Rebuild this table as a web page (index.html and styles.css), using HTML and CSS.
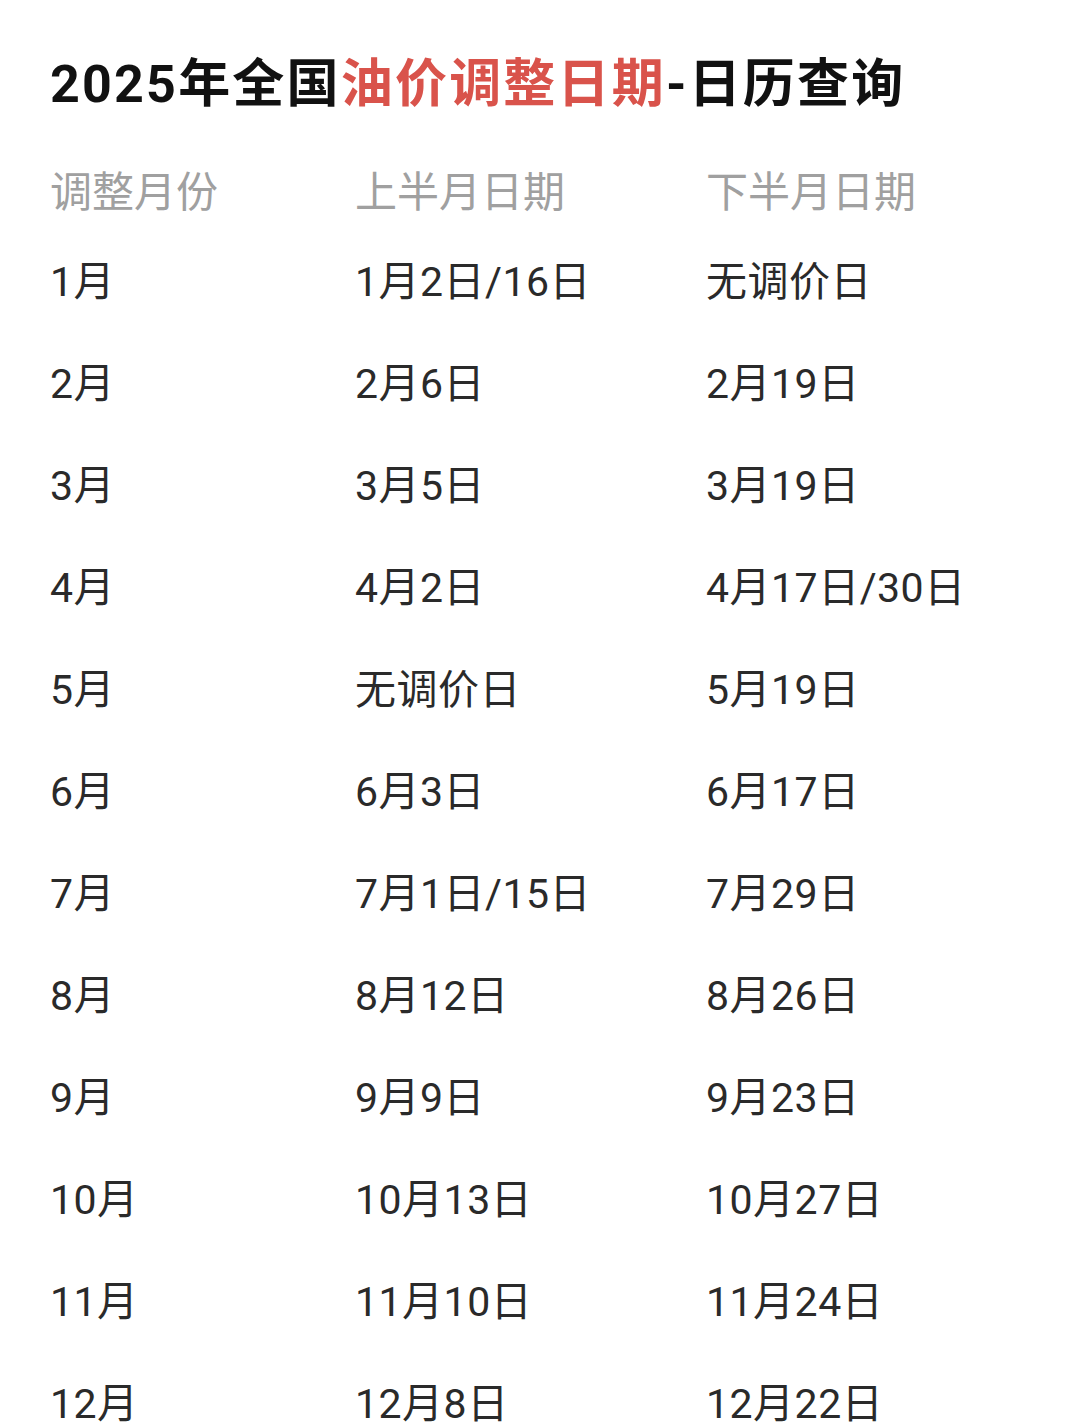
FILE: index.html
```html
<!DOCTYPE html>
<html lang="zh-CN">
<head>
<meta charset="utf-8">
<link rel="stylesheet" href="styles.css">
</head>
<body>
<div class="page">
  <h1 class="title">2025年全国<span class="hl">油价调整日期</span>-日历查询</h1>
  <div class="table">
    <div class="row head"><div>调整月份</div><div>上半月日期</div><div>下半月日期</div></div>
    <div class="row"><div>1月</div><div>1月2日/16日</div><div>无调价日</div></div>
    <div class="row"><div>2月</div><div>2月6日</div><div>2月19日</div></div>
    <div class="row"><div>3月</div><div>3月5日</div><div>3月19日</div></div>
    <div class="row"><div>4月</div><div>4月2日</div><div>4月17日/30日</div></div>
    <div class="row"><div>5月</div><div>无调价日</div><div>5月19日</div></div>
    <div class="row"><div>6月</div><div>6月3日</div><div>6月17日</div></div>
    <div class="row"><div>7月</div><div>7月1日/15日</div><div>7月29日</div></div>
    <div class="row"><div>8月</div><div>8月12日</div><div>8月26日</div></div>
    <div class="row"><div>9月</div><div>9月9日</div><div>9月23日</div></div>
    <div class="row"><div>10月</div><div>10月13日</div><div>10月27日</div></div>
    <div class="row"><div>11月</div><div>11月10日</div><div>11月24日</div></div>
    <div class="row"><div>12月</div><div>12月8日</div><div>12月22日</div></div>
  </div>
</div>
</body>
</html>
```
FILE: styles.css
```css
html, body {
  margin: 0;
  padding: 0;
  background: #ffffff;
}
.page {
  padding: 55px 0 0 50px;
  font-family: Roboto, "Noto Sans CJK SC", sans-serif;
  color: #222222;
}
.title {
  margin: 0;
  font-size: 52px;
  line-height: 60px;
  font-weight: 700;
  color: #111111;
  letter-spacing: 2.2px;
}
.hl {
  color: #d9534b;
}
.table {
  margin-top: 48px;
}
.row {
  display: grid;
  grid-template-columns: 305px 351px 1fr;
  height: 102px;
  align-items: center;
  font-size: 41px;
  line-height: 50px;
  letter-spacing: 0.5px;
  color: #2a2a2a;
}
.row.head {
  height: 60px;
  color: #a0a0a0;
  font-size: 42px;
  letter-spacing: 0;
  margin-bottom: 8px;
}
```
